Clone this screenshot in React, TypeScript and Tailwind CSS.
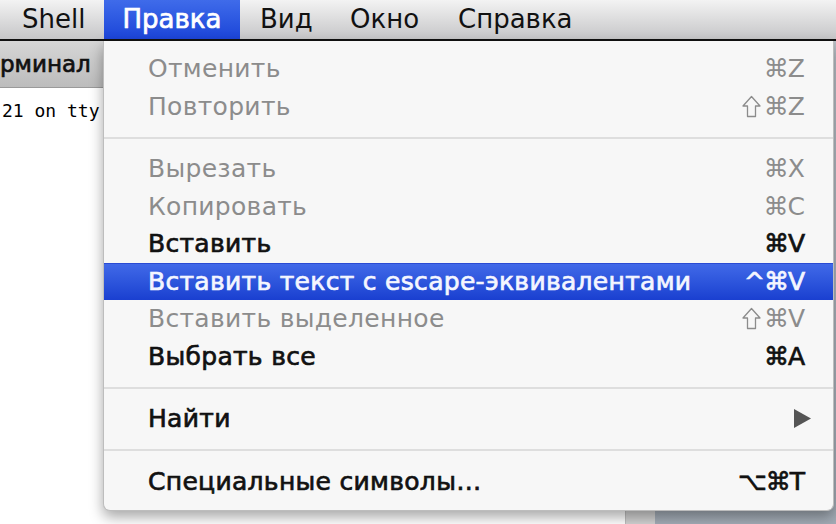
const FONT = "font-['DejaVu_Sans','Liberation_Sans',sans-serif]";
const HEAVY = "[-webkit-text-stroke-width:0.7px]";

type Item =
  | { kind: "sep" }
  | { kind: "item"; label: string; keys?: string; shift?: boolean; disabled?: boolean; active?: boolean; submenu?: boolean };

const items: Item[] = [
  { kind: "item", label: "Отменить", keys: "⌘Z", disabled: true },
  { kind: "item", label: "Повторить", keys: "⌘Z", shift: true, disabled: true },
  { kind: "sep" },
  { kind: "item", label: "Вырезать", keys: "⌘X", disabled: true },
  { kind: "item", label: "Копировать", keys: "⌘C", disabled: true },
  { kind: "item", label: "Вставить", keys: "⌘V" },
  { kind: "item", label: "Вставить текст с escape-эквивалентами", keys: "^⌘V", active: true },
  { kind: "item", label: "Вставить выделенное", keys: "⌘V", shift: true, disabled: true },
  { kind: "item", label: "Выбрать все", keys: "⌘A" },
  { kind: "sep" },
  { kind: "item", label: "Найти", submenu: true },
  { kind: "sep" },
  { kind: "item", label: "Специальные символы…", keys: "⌥⌘T" },
];

// hollow shift arrow
const ShiftIcon = () => (
  <svg width="19" height="23" viewBox="0 0 19 23" className="mr-[3px]">
    <path d="M9.5 1.5 L18 11 H13.5 V21.5 H5.5 V11 H1 Z" fill="none" stroke="currentColor" strokeWidth="1.3" strokeLinejoin="round" />
  </svg>
);

const MenuRow = ({ item }: { item: Item }) => {
  if (item.kind === "sep") {
    return (
      <div className="h-[25px] flex items-center">
        <div className="w-full h-[2px] bg-[#dedede]" />
      </div>
    );
  }
  let rowClass = `text-[#111] ${HEAVY}`;
  if (item.disabled) rowClass = "text-[#8c8c8c]";
  if (item.active) rowClass = `text-[#f4f6ff] ${HEAVY} bg-gradient-to-b from-[#4169e8] to-[#1a3fd0] border-t border-[#2a4bd4]`;
  return (
    <div className={`h-[37.5px] flex items-center justify-between pl-[44px] pr-[29px] text-[25px] tracking-[0.3px] ${rowClass}`}>
      <span>{item.label}</span>
      {item.submenu ? (
        <svg width="17" height="19" viewBox="0 0 17 19" className="mr-[-7px]">
          <path d="M0 0 L17 9.5 L0 19 Z" fill="#555" />
        </svg>
      ) : (
        <span className="flex items-center tracking-[-1px]">
          {item.shift && <ShiftIcon />}
          {item.keys}
        </span>
      )}
    </div>
  );
};

const App = () => {
  return (
    <div className={`w-[836px] h-[524px] relative overflow-hidden bg-[#aab2bb] ${FONT}`}>
      {/* menu bar */}
      <div className="h-[41px] flex items-stretch bg-gradient-to-b from-[#f3f3f3] to-[#c6c6c8] border-b-2 border-[#111] text-[26px] text-[#111]">
        <div className="w-[104px] pl-[22px] flex items-center">Shell</div>
        <div className={`w-[136px] flex items-center justify-center text-white ${HEAVY} bg-gradient-to-b from-[#3f6bea] to-[#1c44d8]`}>
          Правка
        </div>
        <div className="w-[110px] pl-[20px] flex items-center">Вид</div>
        <div className="w-[108px] flex items-center">Окно</div>
        <div className="flex items-center">Справка</div>
      </div>

      {/* terminal window behind the menu */}
      <div className="flex h-[483px]">
        <div className="w-[655px] flex flex-col bg-white">
          <div className={`h-[47px] flex items-center bg-gradient-to-b from-[#d6d6d6] to-[#bcbcbc] border-b border-[#9a9a9a] text-[23px] text-[#111] ${HEAVY}`}>
            рминал
          </div>
          <div className="flex-1 flex">
            <div className="flex-1 pt-[9px] pl-[2px] font-['DejaVu_Sans_Mono',monospace] text-[18px] text-black">
              21 on tty
            </div>
            <div className="w-[30px] bg-[#d2d2d2] border-l border-[#bdbdbd]" />
          </div>
        </div>
        <div className="flex-1 bg-gradient-to-b from-[#b9c0c7] to-[#a3acb6]" />
      </div>

      {/* dropdown menu */}
      <div className="absolute left-[103px] top-[41px] w-[731px] h-[470px] pt-[9px] bg-[#f7f7f7] rounded-b-[7px] border-x border-b border-[#bdbdbd] shadow-[0_6px_14px_rgba(0,0,0,0.35)]">
        {items.map((item, i) => (
          <MenuRow key={i} item={item} />
        ))}
      </div>
    </div>
  );
};

export default App;
